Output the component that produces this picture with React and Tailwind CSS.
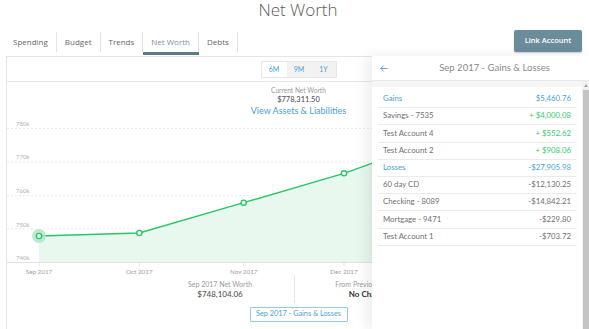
import React from "react";

const tabs = ["Spending", "Budget", "Trends", "Net Worth", "Debts"];

const rows = [
  { label: "Gains", value: "$5,460.76", kind: "head" },
  { label: "Savings - 7535", value: "+ $4,000.08", kind: "gain" },
  { label: "Test Account 4", value: "+ $552.62", kind: "gain" },
  { label: "Test Account 2", value: "+ $908.06", kind: "gain" },
  { label: "Losses", value: "-$27,905.98", kind: "head" },
  { label: "60 day CD", value: "-$12,130.25", kind: "loss" },
  { label: "Checking - 8089", value: "-$14,842.21", kind: "loss" },
  { label: "Mortgage - 9471", value: "-$229.80", kind: "loss" },
  { label: "Test Account 1", value: "-$703.72", kind: "loss" },
];

const pts = [
  [39, 236],
  [139.3, 233],
  [243.7, 202.7],
  [344, 173.3],
  [446, 136.6],
  [548, 110],
];

function Chart() {
  const line = pts.map((p, i) => `${i ? "L" : "M"}${p[0]},${p[1]}`).join(" ");
  const area = `${line} L548,262.5 L39,262.5 Z`;
  const grid = [128.5, 162, 195.5, 229];
  const ylabels = [
    ["780k", 126.2],
    ["770k", 159.3],
    ["760k", 193.3],
    ["750k", 226.7],
    ["740k", 260],
  ];
  const xlabels = [
    ["Sep 2017", 39],
    ["Oct 2017", 139.3],
    ["Nov 2017", 243.7],
    ["Dec 2017", 344],
    ["Jan 2018", 446],
  ];
  return (
    <svg width="575" height="160" viewBox="7 115 575 160" className="block">
      {grid.map((y) => (
        <line key={y} x1="7" x2="582" y1={y} y2={y} stroke="#e4e4e4" strokeWidth="0.8" strokeDasharray="2 2" />
      ))}
      <path d={area} fill="#e8f8ee" />
      <line x1="7" x2="582" y1="262.5" y2="262.5" stroke="#e2e2e2" strokeWidth="1" />
      {ylabels.map(([t, y]) => (
        <text key={t} x="16" y={y} fontSize="6" fill="#b0b0b0" fontFamily="Lato, sans-serif">
          {t}
        </text>
      ))}
      {xlabels.map(([t, x]) => (
        <g key={t}>
          <line x1={x} x2={x} y1="262.5" y2="266" stroke="#dcdcdc" strokeWidth="0.8" />
          <text x={x} y="274" fontSize="6.3" fill="#a0a0a0" textAnchor="middle" fontFamily="Lato, sans-serif">
            {t}
          </text>
        </g>
      ))}
      <path d={line} fill="none" stroke="#27c765" strokeWidth="1.4" />
      <circle cx="39" cy="236" r="7" fill="#a9e7bf" opacity="0.8" />
      {pts.map(([x, y]) => (
        <circle key={x} cx={x} cy={y} r="2.6" fill="#fff" stroke="#27c765" strokeWidth="1.4" />
      ))}
    </svg>
  );
}

export default function App() {
  return (
    <div className="relative w-[589px] h-[329px] overflow-hidden bg-white font-['Lato',sans-serif] text-[#555]">
      {/* Title */}
      <div className="h-[29px] flex justify-center pl-[7px]">
        <h1 className="font-['Open_Sans',sans-serif] font-light text-[17px] leading-[19px] text-[#5a5a5a]">
          Net Worth
        </h1>
      </div>

      {/* Tabs + button */}
      <div className="h-[27px] flex justify-between items-start pl-[5px] pr-[7px]">
        <div className="flex mt-[3px] font-['Open_Sans',sans-serif] text-[8px]">
          {tabs.map((t) => {
            const active = t === "Net Worth";
            return (
              <div key={t} className="flex flex-col">
                <div
                  className={`h-[20px] flex items-center px-[8px] border-r border-[#e3e3e3] ${
                    active ? "text-[#7a8f9b]" : "text-[#666]"
                  }`}
                >
                  {t}
                </div>
                <div className={`h-[3px] ${active ? "bg-[#5d7a89]" : ""}`} />
              </div>
            );
          })}
        </div>
        <button className="mt-[1px] h-[22px] w-[68px] rounded-[2px] bg-[#6b8c9b] text-white font-['Open_Sans',sans-serif] font-semibold text-[7.5px] shadow-[0_1px_2px_rgba(0,0,0,0.2)]">
          Link Account
        </button>
      </div>

      {/* Main card */}
      <div className="mx-[6px] border-x border-t border-[#e6e6e6]">
        <div className="h-[25px] border-b border-[#e8e8e8] flex items-center justify-center pl-[8px]">
          <div className="flex border border-[#e6e6e6] text-[7px] text-[#4a9fd8]">
            <div className="w-[25px] h-[15px] flex items-center justify-center bg-white">6M</div>
            <div className="w-[25px] h-[15px] flex items-center justify-center bg-[#f2f2f2]">9M</div>
            <div className="w-[24px] h-[15px] flex items-center justify-center bg-[#f2f2f2]">1Y</div>
          </div>
        </div>

        <div className="h-[33px] flex flex-col items-center pl-[8px] pt-[4px]">
          <div className="text-[6.6px] leading-[9px] text-[#9a9a9a]">Current Net Worth</div>
          <div className="text-[7.5px] leading-[10px] text-[#555] font-medium">$778,311.50</div>
          <div className="text-[9px] leading-[12px] text-[#4a9fd8]">View Assets &amp; Liabilities</div>
        </div>

        <Chart />

        <div className="flex justify-center h-[28px]">
          <div className="w-[148px] border-r border-[#e6e6e6] flex flex-col items-center pt-[5px]">
            <div className="text-[7px] leading-[9px] text-[#9a9a9a]">Sep 2017 Net Worth</div>
            <div className="text-[8px] leading-[11px] text-[#555] font-medium">$748,104.06</div>
          </div>
          <div className="w-[148px] flex flex-col items-center pt-[5px]">
            <div className="text-[7px] leading-[9px] text-[#9a9a9a]">From Previous Month</div>
            <div className="text-[8px] leading-[11px] text-[#333] font-bold">No Change</div>
          </div>
        </div>

        <div className="flex justify-center pl-[8px] pt-[4px] h-[30px]">
          <button className="w-[98px] h-[15px] border border-[#93c9ec] rounded-[1px] text-[7.3px] text-[#4a9fd8] bg-white">
            Sep 2017 - Gains &amp; Losses
          </button>
        </div>
      </div>

      {/* Side panel */}
      <aside className="absolute left-[372px] top-[56px] bottom-0 w-[217px] bg-white shadow-[-6px_0_12px_rgba(0,0,0,0.07)] flex flex-col">
        <div className="h-[25px] border-b border-[#e8e8e8] flex items-center">
          <div className="w-[28px] flex items-center pl-[8px]">
            <svg width="8" height="7" viewBox="0 0 8 7" fill="none" stroke="#4a9fd8" strokeWidth="0.9">
              <path d="M7.5 3.5H0.8M3.6 0.6L0.8 3.5L3.6 6.4" />
            </svg>
          </div>
          <div className="flex-1 text-center text-[9.5px] text-[#8a8a8a]">Sep 2017 - Gains &amp; Losses</div>
        </div>
        <div className="flex-1 flex min-h-0">
          <div className="flex-1 flex flex-col">
            <div className="h-[6px] bg-[#f6f6f6]" />
            <div className="pt-[4px] px-[6px]">
              {rows.map((r) => (
                <div
                  key={r.label}
                  className="h-[17.2px] flex items-center justify-between px-[5px] border-b border-[#ebebeb] text-[7.8px]"
                >
                  <span className={r.kind === "head" ? "text-[#4a9fd8]" : "text-[#707070]"}>{r.label}</span>
                  <span
                    className={
                      r.kind === "head" ? "text-[#4a9fd8]" : r.kind === "gain" ? "text-[#37c96f]" : "text-[#707070]"
                    }
                  >
                    {r.value}
                  </span>
                </div>
              ))}
            </div>
          </div>
          <div className="w-[7px] bg-[#f1f1f1] flex flex-col">
            <div className="h-[9px] flex items-center justify-center">
              <div className="w-0 h-0 border-x-[2px] border-x-transparent border-b-[3px] border-b-[#a3a3a3]" />
            </div>
            <div className="flex-1 bg-[#c4c4c4] ml-[1px]" />
          </div>
        </div>
      </aside>
    </div>
  );
}
